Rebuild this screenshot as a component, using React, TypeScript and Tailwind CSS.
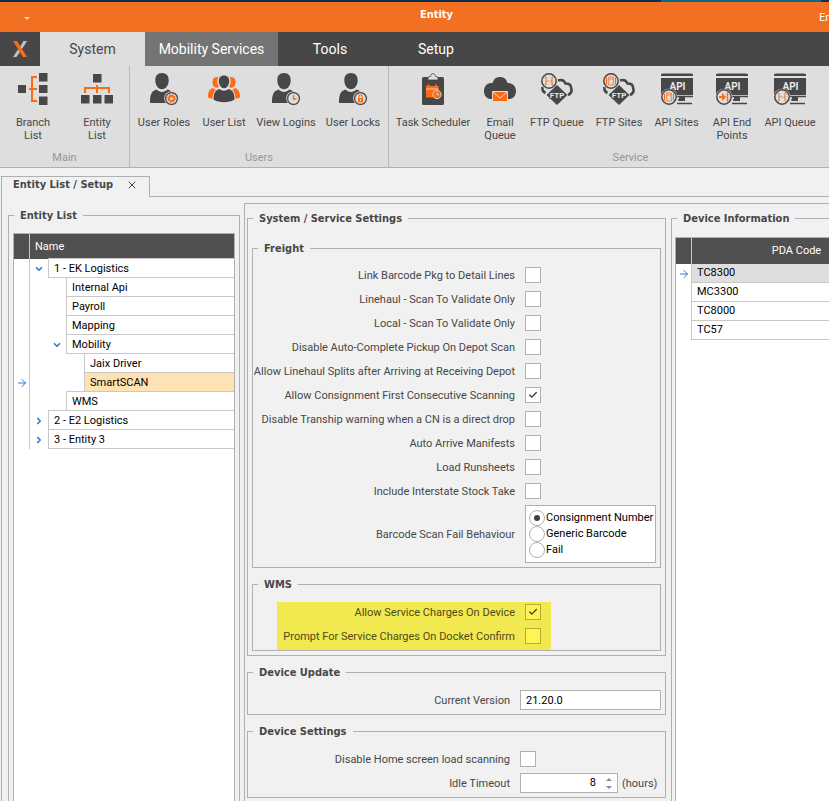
import { useState, type ReactNode } from 'react';
import { ArrowRight, Check, ChevronDown, ChevronRight, X } from 'lucide-react';
import clsx from 'clsx';

const DARK = '#474747';
const ORANGE = '#ff6a13';
const PANEL = '#dedede';

/* ---------- ribbon icons ---------- */

function BranchIcon() {
  return (
    <svg viewBox="0 0 32 32" className="size-8">
      <path d="M20 4h-5v24h5M12 16h8" fill="none" stroke={ORANGE} strokeWidth="2" />
      <path d="M1 12h8v8H1zM22 0h8.500v8.500H22zM22 12h8.500v8H22zM22 23.500h8.500V32H22z" fill={DARK} />
    </svg>
  );
}

function HierarchyIcon() {
  return (
    <svg viewBox="0 0 32 32" className="size-8">
      <path d="M4 20v-5h24v5M16 12v8" fill="none" stroke={ORANGE} strokeWidth="2" />
      <path d="M12 1h8.500v8.500H12zM0 22h8.500v8.500H0zM12 22h8.500v8.500H12zM23.500 22H32v8.500h-8.500z" fill={DARK} />
    </svg>
  );
}

function UserIcon({ children }: { children: ReactNode }) {
  return (
    <svg viewBox="0 0 32 32" className="size-8">
      <path d="M14 0c4.600 0 6.700 3 6.700 7.200 0 4.800-2.800 9-6.700 9s-6.700-4.200-6.700-9C7.300 3 9.400 0 14 0z" fill={DARK} />
      <path d="M8.500 16.500c3.200 3.200 7.800 3.200 11 0 4.800 1.500 7.300 4 7.300 13.500H2c0-9 1.700-12 6.500-13.500z" fill={DARK} />
      <circle cx="23.500" cy="25.500" r="7.300" fill={PANEL} />
      <circle cx="23.500" cy="25.500" r="5.900" fill={PANEL} stroke={DARK} strokeWidth="1.300" />
      {children}
    </svg>
  );
}

function GearBadge() {
  return (
    <>
      <circle cx="23.500" cy="25.500" r="2.500" fill="none" stroke={ORANGE} strokeWidth="1.900" />
      <circle cx="23.500" cy="25.500" r="3.700" fill="none" stroke={ORANGE} strokeWidth="1.300" strokeDasharray="1.450 1.450" />
    </>
  );
}

function ClockBadge() {
  return <path d="M23.500 22v4h3" fill="none" stroke={ORANGE} strokeWidth="1.300" />;
}

function LockBadge() {
  return (
    <>
      <path d="M21 25h5v4.300h-5z" fill={ORANGE} />
      <path d="M21.800 25v-1.500a1.700 1.700 0 0 1 3.400 0V25" fill="none" stroke={ORANGE} strokeWidth="1.100" />
      <path d="M23.500 26.300v1.700" stroke="#fff" strokeWidth=".8" />
    </>
  );
}

function UsersIcon() {
  return (
    <svg viewBox="0 0 32 32" className="size-8">
      <g fill={ORANGE}>
        <path d="M4.500 9c0-3.800 1.800-5.300 5.700-5-1.500 3-1.200 7 .8 10-1.200.8-2.500 1-3.500.6C5.500 13.800 4.500 11.500 4.500 9zM27.500 9c0-3.800-1.800-5.300-5.700-5 1.500 3 1.200 7-.8 10 1.200.8 2.500 1 3.500.6 2-.8 3-3.100 3-5.600z" />
        <path d="M0 24c0-5 1.500-8 5-9 1 1.200 2 1.800 3 1.800C5.500 19 5 21 4.500 25.500 2.500 25.500 1 25 0 24zM32 24c0-5-1.500-8-5-9-1 1.200-2 1.800-3 1.800 2.500 2.200 3 4.200 3.500 8.700 2 0 3.500-.5 4.500-1.500z" />
      </g>
      <g fill={DARK}>
        <path d="M16 2.500c3.500 0 5.200 2.300 5.200 5.500 0 4-2.300 7.200-5.200 7.200S10.800 12 10.800 8c0-3.200 1.700-5.500 5.200-5.500z" />
        <path d="M11.500 16c2.500 2.200 6.500 2.200 9 0 4 1 6 4 6 10.500-5 3.500-16 3.500-21 0 0-6.500 2-9.500 6-10.500z" />
      </g>
    </svg>
  );
}

function ClipboardIcon() {
  return (
    <svg viewBox="0 0 32 32" className="size-8">
      <rect x="5" y="4" width="22" height="28" rx="1.500" fill={DARK} />
      <path d="M11 7V4l2.500-.5C14 1.500 14.500.7 16 .7s2 .8 2.500 2.800L21 4v3z" fill={PANEL} stroke={DARK} strokeWidth=".8" />
      <path d="M9 13h12.500v11.500H9z" fill={ORANGE} />
      <path d="M11.500 11.500v3M19 11.500v3" stroke={ORANGE} strokeWidth="2" />
      <path d="M9 16h12.500" stroke={PANEL} strokeWidth=".9" />
      <circle cx="20" cy="21.500" r="4.200" fill={ORANGE} stroke={PANEL} strokeWidth=".9" />
      <path d="M20 19v2.800h2" fill="none" stroke={PANEL} strokeWidth=".9" />
    </svg>
  );
}

function CloudMailIcon() {
  return (
    <svg viewBox="0 0 32 32" className="size-8">
      <path d="M6.500 26C2.500 25.500 0 22.500 0 18c0-5 3.500-8.500 8.500-8C10 5.500 12.500 4 16 4s6.500 2 7.500 6c5 0 8.500 3 8.500 8 0 4.500-2.500 7.500-6.500 8z" fill={DARK} />
      <path d="M8.500 18.500h15v10h-15z" fill={ORANGE} stroke={PANEL} />
      <path d="M9 19l7 6 7-6" fill="none" stroke={PANEL} />
    </svg>
  );
}

function QueueGlyph() {
  return (
    <g fill="none" stroke={ORANGE}>
      <path d="M-4.500-4h1.500v8h-1.500M4.500-4H3v8h1.500" />
      <path d="M-3 0h6" strokeWidth=".8" strokeDasharray="1.500 .7" />
    </g>
  );
}

function SiteGlyph() {
  return (
    <g fill="none" stroke={ORANGE}>
      <path d="M-4.500-3.500v7M4.500-3.500v7" strokeWidth="1.200" />
      <path d="M-2.300-4h4.600v8h-4.600zM-2.300-2h4.600" strokeWidth=".8" />
    </g>
  );
}

function EndPointGlyph() {
  return (
    <g>
      <path d="M-5-1h3v-3L2 0l-4 4V1h-3z" fill={ORANGE} />
      <path d="M3.500-4.500v9" stroke={ORANGE} strokeWidth="1.500" />
    </g>
  );
}

function FtpIcon({ children }: { children: ReactNode }) {
  return (
    <svg viewBox="0 0 32 32" className="size-8">
      <path d="M17 7.500c3-1 6-.5 7.500 3 3.500 0 5.500 1.700 5.500 4 1.500 4-.5 6.500-3 7.500M1.500 14c-.5 3 .5 5 3 6" fill="none" stroke={DARK} strokeWidth="2.500" />
      <path d="M16 12L26.500 22 16 32 5.500 22z" fill={DARK} />
      <circle cx="8" cy="8" r="8" fill={PANEL} />
      <circle cx="8" cy="8" r="7.200" fill={PANEL} stroke={DARK} strokeWidth="1.500" />
      <text x="16" y="24.500" textAnchor="middle" fontSize="8" fontWeight="700" fill="#e8e8e8" stroke={DARK} strokeWidth="1.500" paintOrder="stroke">FTP</text>
      <g transform="translate(8 8)">{children}</g>
    </svg>
  );
}

function ApiIcon({ children }: { children: ReactNode }) {
  return (
    <svg viewBox="0 0 32 32" className="size-8">
      <path d="M0 3V2Q0 .5 1.500.5h29Q32 .5 32 2v1zM0 5h32v17H0z" fill={DARK} />
      <path d="M0 23.500h32M17 27h5M16 30.500h15" stroke={DARK} strokeWidth="1.500" />
      <path d="M18 24h6v4h-6z" fill={DARK} />
      <text x="16.500" y="17" textAnchor="middle" fontSize="10" fontWeight="700" fill="#e8e8e8">API</text>
      <circle cx="8" cy="24" r="8.300" fill={PANEL} />
      <circle cx="8" cy="24" r="7.200" fill={PANEL} stroke={DARK} strokeWidth="1.500" />
      <g transform="translate(8 24)">{children}</g>
    </svg>
  );
}

function LogoIcon() {
  return (
    <svg viewBox="0 0 14 16" className="h-4 w-3.5">
      <path d="M0 0h4l10 16h-4z" fill={ORANGE} />
      <path d="M10.500 0H14L9 8 7.300 5.300zM5 8.500L6.800 11 3.500 16H0z" fill="#c4c4c4" />
    </svg>
  );
}

/* ---------- data ---------- */

type RibbonItem = { lines: string[]; icon: ReactNode; width: string };

const mainItems: RibbonItem[] = [
  { lines: ['Branch', 'List'], icon: <BranchIcon />, width: 'w-[64px]' },
  { lines: ['Entity', 'List'], icon: <HierarchyIcon />, width: 'w-[64px]' },
];

const userItems: RibbonItem[] = [
  { lines: ['User Roles'], icon: <UserIcon><GearBadge /></UserIcon>, width: 'w-[66px]' },
  { lines: ['User List'], icon: <UsersIcon />, width: 'w-[54px]' },
  { lines: ['View Logins'], icon: <UserIcon><ClockBadge /></UserIcon>, width: 'w-[70px]' },
  { lines: ['User Locks'], icon: <UserIcon><LockBadge /></UserIcon>, width: 'w-[64px]' },
];

const serviceItems: RibbonItem[] = [
  { lines: ['Task Scheduler'], icon: <ClipboardIcon />, width: 'w-[86px]' },
  { lines: ['Email', 'Queue'], icon: <CloudMailIcon />, width: 'w-[48px]' },
  { lines: ['FTP Queue'], icon: <FtpIcon><QueueGlyph /></FtpIcon>, width: 'w-[66px]' },
  { lines: ['FTP Sites'], icon: <FtpIcon><SiteGlyph /></FtpIcon>, width: 'w-[58px]' },
  { lines: ['API Sites'], icon: <ApiIcon><SiteGlyph /></ApiIcon>, width: 'w-[57px]' },
  { lines: ['API End', 'Points'], icon: <ApiIcon><EndPointGlyph /></ApiIcon>, width: 'w-[54px]' },
  { lines: ['API Queue'], icon: <ApiIcon><QueueGlyph /></ApiIcon>, width: 'w-[62px]' },
];

type TreeRow = { name: string; level: 1 | 2 | 3; open?: boolean };

const tree: TreeRow[] = [
  { name: '1 - EK Logistics', level: 1, open: true },
  { name: 'Internal Api', level: 2 },
  { name: 'Payroll', level: 2 },
  { name: 'Mapping', level: 2 },
  { name: 'Mobility', level: 2, open: true },
  { name: 'Jaix Driver', level: 3 },
  { name: 'SmartSCAN', level: 3 },
  { name: 'WMS', level: 2 },
  { name: '2 - E2 Logistics', level: 1, open: false },
  { name: '3 - Entity 3', level: 1, open: false },
];

const indents = { 1: 'w-[18px]', 2: 'w-[36px]', 3: 'w-[54px]' };

const freightOptions = [
  'Link Barcode Pkg to Detail Lines',
  'Linehaul - Scan To Validate Only',
  'Local - Scan To Validate Only',
  'Disable Auto-Complete Pickup On Depot Scan',
  'Allow Linehaul Splits after Arriving at Receiving Depot',
  'Allow Consignment First Consecutive Scanning',
  'Disable Tranship warning when a CN is a direct drop',
  'Auto Arrive Manifests',
  'Load Runsheets',
  'Include Interstate Stock Take',
];

const failModes = ['Consignment Number', 'Generic Barcode', 'Fail'];

const devices = ['TC8300', 'MC3300', 'TC8000', 'TC57'];

/* ---------- building blocks ---------- */

function RibbonGroup({ title, items, className }: { title: string; items: RibbonItem[]; className?: string }) {
  return (
    <div className={clsx('flex shrink-0 flex-col justify-between border-r border-[#b8b8b8] pt-[7px] pb-[3px]', className)}>
      <div className="flex pl-px">
        {items.map(item => (
          <button key={item.lines.join(' ')} className={clsx('flex flex-col items-center whitespace-nowrap leading-[13px] hover:bg-black/5', item.width)}>
            {item.icon}
            <span className="mt-[11px]">
              {item.lines.map(line => <span key={line} className="block">{line}</span>)}
            </span>
          </button>
        ))}
      </div>
      <div className="text-center leading-[13px] text-[#969696]">{title}</div>
    </div>
  );
}

// Padding goes on the inner div so that it does not push the legend sideways
function Group({ title, className, bodyClassName, children }: { title: string; className?: string; bodyClassName?: string; children: ReactNode }) {
  return (
    <fieldset className={clsx('min-w-0 border border-[#b0b0b0]', className)}>
      <legend className="ml-[5px] px-1.5 font-['DejaVu_Sans_Condensed','DejaVu_Sans',sans-serif] font-bold leading-[15px]">{title}</legend>
      <div className={bodyClassName}>{children}</div>
    </fieldset>
  );
}

function CheckBox({ id, defaultChecked, marked }: { id: string; defaultChecked?: boolean; marked?: boolean }) {
  return (
    <span className="grid size-4 shrink-0 place-items-center">
      <input
        id={id}
        type="checkbox"
        defaultChecked={defaultChecked}
        className={clsx('peer col-start-1 row-start-1 size-4 appearance-none border', marked ? 'border-[#b5ac38] bg-[#fff455]' : 'border-[#b0b0b0] bg-white')}
      />
      <Check className="pointer-events-none invisible col-start-1 row-start-1 size-2.5 text-[#333] peer-checked:visible" strokeWidth={3} />
    </span>
  );
}

function CheckRow({ label, checked, marked }: { label: string; checked?: boolean; marked?: boolean }) {
  const id = label.toLowerCase().replace(/\W+/g, '-');
  return (
    <div className={clsx('flex h-6 items-center gap-2.5', marked && 'pb-1')}>
      <label htmlFor={id} className={clsx('whitespace-nowrap pt-0.5 text-right', marked ? 'w-[238px] text-[#4e4b1c]' : 'w-[262px]')}>{label}</label>
      <CheckBox id={id} defaultChecked={checked} marked={marked} />
    </div>
  );
}

/* ---------- page ---------- */

export default function App() {
  const [selected, setSelected] = useState('SmartSCAN');
  const [failMode, setFailMode] = useState(failModes[0]);

  return (
    <div className="flex min-h-screen flex-col overflow-hidden bg-[#f1f1f1] font-[Roboto,sans-serif] text-[11px] text-[#474747]">
      {/* Title bar */}
      <div className="flex h-0.5 bg-[#0b3050]">
        <div className="ml-auto mr-2 h-0.5 w-40 bg-[#0a6a90]" />
      </div>
      <header className="grid h-[30px] grid-cols-[384px_105px_1fr] bg-[#f36f21] text-white">
        <div className="flex items-center pl-6">
          <button aria-label="Customize toolbar">
            <svg viewBox="0 0 6 3" className="h-[3px] w-1.5"><path d="M0 0h6L3 3z" fill="#ffd0b0" /></svg>
          </button>
        </div>
        <div className="border-b-2 border-[#e6b4e6] text-center font-['DejaVu_Sans_Condensed','DejaVu_Sans',sans-serif] font-bold leading-[26px]">Entity</div>
        <div className="text-right leading-8">Er</div>
      </header>

      {/* Ribbon tabs */}
      <nav className="flex h-[34px] bg-[#474747] text-[14px] text-white">
        <button aria-label="Application menu" className="flex w-10 items-center justify-center"><LogoIcon /></button>
        <button className="w-[105px] bg-[#dedede] text-[#474747]">System</button>
        <button className="w-[133px] bg-[#747474]">Mobility Services</button>
        <button className="w-[104px]">Tools</button>
        <button className="w-[108px]">Setup</button>
      </nav>

      {/* Ribbon */}
      <div className="flex h-[102px] border-b border-[#b0b0b0] bg-[#dedede]">
        <RibbonGroup title="Main" items={mainItems} className="w-[130px]" />
        <RibbonGroup title="Users" items={userItems} className="w-[259px]" />
        <RibbonGroup title="Service" items={serviceItems} className="w-[484px]" />
      </div>

      {/* Document tabs */}
      <div className="flex h-[29px] pl-px">
        <div className="mt-2 flex w-[149px] items-center gap-[13px] border-x border-t border-[#b0b0b0] pb-1 pl-[11px] font-['DejaVu_Sans_Condensed','DejaVu_Sans',sans-serif] font-bold whitespace-nowrap">
          Entity List / Setup
          <button aria-label="Close tab"><X className="size-3" strokeWidth={2} /></button>
        </div>
        <div className="flex-1 border-b border-[#b0b0b0]" />
      </div>

      <main className="ml-px flex flex-1 border-l border-[#b0b0b0] pl-1.5">
        <Group title="Entity List" className="mt-[11px] flex w-[232px] shrink-0 flex-col border-b-0" bodyClassName="flex flex-1 flex-col px-1 pt-[10px]">
          <div role="tree" className="flex flex-1 flex-col border border-b-0 border-[#b0b0b0] bg-white text-black">
            <div className="flex h-[25px] shrink-0 bg-[#505050] leading-[26px] text-white">
              <span className="w-4 border-r border-[#c8c8c8]" />
              <span className="pl-[5px]">Name</span>
            </div>
            {tree.map(row => (
              <div
                key={row.name}
                role="treeitem"
                aria-selected={row.name === selected}
                aria-level={row.level}
                onClick={() => setSelected(row.name)}
                className="flex h-[19px] shrink-0"
              >
                <span className="flex w-4 shrink-0 items-center justify-center border-r border-[#c8c8c8]">
                  {row.name === selected && <ArrowRight className="size-3 shrink-0 text-[#2a78d4]" />}
                </span>
                <span className={clsx('flex shrink-0 items-center justify-end pr-1', indents[row.level])}>
                  {row.open === true && <ChevronDown className="size-2.5 text-[#2a78d4]" strokeWidth={4} />}
                  {row.open === false && <ChevronRight className="size-2.5 text-[#2a78d4]" strokeWidth={4} />}
                </span>
                <span className={clsx('-mt-px h-5 flex-1 border border-r-0 border-[#c8c8c8] pl-[5px] leading-5', row.name === selected && 'bg-[#ffe2b3]')}>
                  {row.name}
                </span>
              </div>
            ))}
          </div>
        </Group>

        <div className="mt-1.5 ml-1 flex min-w-0 flex-1 gap-[5px] border-t border-l border-[#b0b0b0] pt-[7px] pl-0.5">
          <div className="flex w-[419px] shrink-0 flex-col gap-[9px] pb-[3px]">
            <Group title="System / Service Settings" bodyClassName="px-1 pt-[15px] pb-1">
              <Group title="Freight" bodyClassName="pt-[7px] pb-1">
                {freightOptions.map(label => (
                  <CheckRow key={label} label={label} checked={label.startsWith('Allow Consignment')} />
                ))}
                <div className="mt-0.5 flex items-center gap-2.5" role="radiogroup" aria-labelledby="fail-mode">
                  <span id="fail-mode" className="w-[262px] pt-0.5 text-right">Barcode Scan Fail Behaviour</span>
                  <div className="w-[131px] border border-[#b0b0b0] bg-white py-1 pl-[3px] text-black">
                    {failModes.map(mode => (
                      <label key={mode} className="flex h-4 items-center gap-px whitespace-nowrap leading-[18px]">
                        <span className="grid size-4 shrink-0 place-items-center">
                          <input
                            type="radio"
                            name="fail-mode"
                            checked={failMode === mode}
                            onChange={() => setFailMode(mode)}
                            className="peer col-start-1 row-start-1 size-4 appearance-none rounded-full border border-[#b0b0b0] bg-white"
                          />
                          <span className="pointer-events-none invisible col-start-1 row-start-1 size-1.5 rounded-full bg-[#404040] peer-checked:visible" />
                        </span>
                        {mode}
                      </label>
                    ))}
                  </div>
                </div>
              </Group>

              <Group title="WMS" className="mt-[9px]" bodyClassName="pt-[10px]">
                <div className="ml-6 w-[274px] bg-[#f2e850]">
                  <CheckRow label="Allow Service Charges On Device" checked marked />
                  <CheckRow label="Prompt For Service Charges On Docket Confirm" marked />
                </div>
              </Group>
            </Group>

            <Group title="Device Update" bodyClassName="pt-[10px] pr-1 pb-1">
              <div className="flex items-center gap-2.5">
                <label htmlFor="version" className="w-[262px] pt-0.5 text-right">Current Version</label>
                <input id="version" defaultValue="21.20.0" className="h-5 min-w-0 flex-1 border border-[#b0b0b0] bg-white px-[5px] text-black" />
              </div>
            </Group>

            <Group title="Device Settings" bodyClassName="pt-2 pb-0.5">
              <CheckRow label="Disable Home screen load scanning" />
              <div className="flex h-6 items-center gap-2.5">
                <label htmlFor="idle" className="w-[262px] pt-0.5 text-right">Idle Timeout</label>
                <div className="flex items-center gap-1">
                  <div className="flex h-5 w-[98px] items-center border border-[#b0b0b0] bg-white pr-[5px]">
                    <input id="idle" defaultValue="8" inputMode="numeric" className="w-0 min-w-0 flex-1 pr-2.5 text-right text-black" />
                    <div className="flex flex-col gap-[5px]">
                      <button aria-label="Increase"><svg viewBox="0 0 6 3" className="block h-[3px] w-1.5"><path d="M3 0l3 3H0z" fill="#8a8a8a" /></svg></button>
                      <button aria-label="Decrease"><svg viewBox="0 0 6 3" className="block h-[3px] w-1.5"><path d="M0 0h6L3 3z" fill="#8a8a8a" /></svg></button>
                    </div>
                  </div>
                  <span className="pt-0.5">(hours)</span>
                </div>
              </div>
            </Group>
          </div>

          <Group title="Device Information" className="flex flex-1 flex-col border-r-0 border-b-0" bodyClassName="flex flex-1 flex-col pt-[11px] pl-[3px]">
            <div className="flex-1 border-t border-l border-[#b0b0b0] bg-white">
              <table className="w-full min-w-[225px] border-separate border-spacing-0 text-left text-black">
                <thead>
                  <tr className="h-[25px] bg-[#505050] text-white">
                    <th className="w-[15px] p-0" aria-label="Current row" />
                    <th className="border-l border-[#c8c8c8] p-0 text-center font-normal leading-[26px]">PDA Code</th>
                  </tr>
                </thead>
                <tbody>
                  {devices.map((code, i) => (
                    <tr key={code} className="h-[19px]">
                      <td className="p-0">{i === 0 && <ArrowRight className="mx-auto size-3 text-[#2a78d4]" />}</td>
                      <td className={clsx('border-b border-l border-[#c8c8c8] py-0 pl-[5px] leading-[18px]', i === 0 && 'bg-[#dedede]')}>{code}</td>
                    </tr>
                  ))}
                </tbody>
              </table>
            </div>
          </Group>
        </div>
      </main>
    </div>
  );
}
